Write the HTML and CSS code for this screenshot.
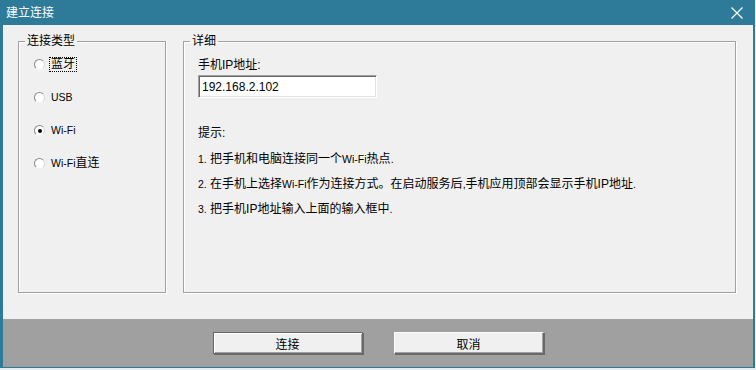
FILE: index.html
```html
<!DOCTYPE html>
<html lang="zh-CN">
<head>
    <meta charset="UTF-8">
    <meta content="width=device-width, initial-scale=1.0" name="viewport">
    <link rel="stylesheet" href="styles.css">
</head>
<body>
    <div class="window">
        <!-- Title bar -->
        <div class="titleBar">
            <span class="titleText">建立连接</span>
            <svg class="closeIcon" width="12" height="12" viewBox="0 0 12 12">
                <path d="M0.5 0.5 L11.5 11.5 M11.5 0.5 L0.5 11.5" stroke="#fff" stroke-width="1.2" fill="none"></path>
            </svg>
        </div>

        <div class="dialogBody">
            <!-- Connection type -->
            <fieldset class="groupBox typeBox">
                <legend>连接类型</legend>
                <div class="groupContent">
                    <div class="radioRow">
                        <span class="radio"></span>
                        <span class="radioLabel focused">蓝牙</span>
                    </div>
                    <div class="radioRow">
                        <span class="radio"></span>
                        <span class="radioLabel"><span class="lat">USB</span></span>
                    </div>
                    <div class="radioRow">
                        <span class="radio checked"></span>
                        <span class="radioLabel"><span class="lat">Wi-Fi</span></span>
                    </div>
                    <div class="radioRow">
                        <span class="radio"></span>
                        <span class="radioLabel"><span class="lat">Wi-Fi</span>直连</span>
                    </div>
                </div>
            </fieldset>

            <!-- Details -->
            <fieldset class="groupBox detailBox">
                <legend>详细</legend>
                <div class="groupContent">
                    <div class="fieldLabel">手机IP地址:</div>
                    <div class="textInput">192.168.2.102</div>

                    <div class="hintTitle">提示:</div>
                    <div class="hintLine"><span class="lat">1.</span> 把手机和电脑连接同一个<span class="lat">Wi-Fi</span>热点<span class="lat">.</span></div>
                    <div class="hintLine"><span class="lat">2.</span> 在手机上选择<span class="lat">Wi-Fi</span>作为连接方式。在启动服务后<span class="lat">,</span>手机应用顶部会显示手机IP地址<span class="lat">.</span></div>
                    <div class="hintLine"><span class="lat">3.</span> 把手机IP地址输入上面的输入框中<span class="lat">.</span></div>
                </div>
            </fieldset>
        </div>

        <!-- Buttons -->
        <div class="footer">
            <button class="btn defaultBtn" type="button">连接</button>
            <button class="btn" type="button">取消</button>
        </div>
    </div>
</body>
</html>
```

FILE: styles.css
```css
body {
    margin: 0;
    background-color: #e6edf1;
    font-family: "Liberation Sans", "Noto Sans CJK SC", sans-serif;
    font-size: 12px;
    color: #000;
}

.window {
    width: 750px;
    height: 367px;
    border-left: 3px solid #2e7b99;
    border-right: 2px solid #2e7b99;
    border-bottom: 1px solid #2e7b99;
    display: flex;
    flex-direction: column;
    background-color: #f0f0f0;
}

.titleBar {
    height: 25px;
    background-color: #2e7b99;
    display: flex;
    align-items: center;
    justify-content: space-between;
    padding: 0 10px 0 3px;
    color: #fff;
}

.titleText {
    font-size: 12px;
    line-height: 14px;
}

.closeIcon {
    display: block;
    margin-top: 1px;
}

.dialogBody {
    flex: 1;
    display: flex;
    gap: 17px;
    padding: 9px 17px 26px 15px;
}

.groupBox {
    margin: 0;
    padding: 0;
    box-sizing: border-box;
    border: 1px solid #a0a0a0;
    box-shadow: 1px 1px 0 #fff, inset 1px 1px 0 #fff;
    min-width: 0;
}

.groupBox legend {
    margin-left: 6px;
    padding: 0 2px;
    line-height: 14px;
    font-size: 12px;
}

.typeBox {
    width: 148px;
    flex: none;
}

.typeBox .groupContent {
    padding-left: 15px;
}

.detailBox {
    flex: 1;
}

.detailBox .groupContent {
    padding-left: 14px;
}

.radioRow {
    height: 33px;
    display: flex;
    align-items: center;
    gap: 5px;
}

.radio {
    width: 9px;
    height: 9px;
    border-radius: 50%;
    border: 1px solid;
    border-color: #8a8a8a #d8d8d8 #f4f4f4 #8a8a8a;
    background-color: #fff;
    position: relative;
}

.radio.checked::after {
    content: "";
    position: absolute;
    left: 2.5px;
    top: 2.5px;
    width: 4px;
    height: 4px;
    border-radius: 50%;
    background-color: #000;
}

.radioLabel {
    line-height: 13px;
    padding: 0 1px;
}

.focused {
    outline: 1px dotted #000;
}

.lat {
    font-size: 10.5px;
}

.fieldLabel {
    margin-top: 10px;
    line-height: 14px;
}

.textInput {
    margin-top: 3px;
    box-sizing: border-box;
    width: 179px;
    height: 23px;
    border: 1px solid;
    border-color: #a0a0a0 #fff #fff #a0a0a0;
    box-shadow: inset 1px 1px 0 #696969, inset -1px -1px 0 #e3e3e3;
    background-color: #fff;
    padding: 4px 3px;
    line-height: 14px;
}

.hintTitle {
    margin-top: 28px;
    line-height: 14px;
}

.hintLine {
    margin-top: 11px;
    line-height: 14px;
}

.hintTitle + .hintLine {
    margin-top: 12px;
}

.footer {
    height: 48px;
    background-color: #a0a0a0;
    display: flex;
    justify-content: center;
    align-items: flex-start;
    gap: 31px;
    padding-top: 13px;
    box-sizing: border-box;
}

.btn {
    width: 150px;
    height: 22px;
    margin: 0;
    padding: 0;
    font-family: "Liberation Sans", "Noto Sans CJK SC", sans-serif;
    font-size: 12px;
    color: #000;
    background-color: #f0f0f0;
    border: 1px solid;
    border-color: #fff #696969 #696969 #fff;
    box-shadow: inset -1px -1px 0 #a0a0a0, 1px 1px 0 #696969;
}

.defaultBtn {
    border-color: #696969;
    box-shadow: inset 1px 1px 0 #fff, inset -1px -1px 0 #a0a0a0, 1px 1px 0 #696969;
}
```
